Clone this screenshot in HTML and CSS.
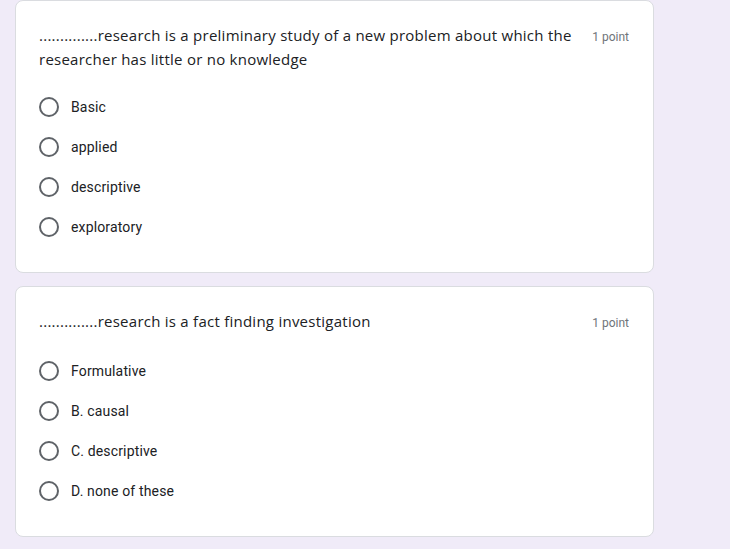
FILE: index.html
```html
<!DOCTYPE html>
<html lang="en">
<head>
  <meta charset="UTF-8">
  <meta name="viewport" content="width=device-width, initial-scale=1.0">
  <title>Research Quiz</title>
  <link rel="stylesheet" href="styles.css">
</head>
<body>
  <!-- Question 1 -->
  <div class="card">
    <div class="question-head">
      <p class="question">..............research is a preliminary study of a new problem about which the researcher has little or no knowledge</p>
      <span class="points">1 point</span>
    </div>
    <div class="options first">
      <label class="option"><span class="radio"></span>Basic</label>
      <label class="option"><span class="radio"></span>applied</label>
      <label class="option"><span class="radio"></span>descriptive</label>
      <label class="option"><span class="radio"></span>exploratory</label>
    </div>
  </div>

  <!-- Question 2 -->
  <div class="card">
    <div class="question-head">
      <p class="question">..............research is a fact finding investigation</p>
      <span class="points">1 point</span>
    </div>
    <div class="options second">
      <label class="option"><span class="radio"></span>Formulative</label>
      <label class="option"><span class="radio"></span>B. causal</label>
      <label class="option"><span class="radio"></span>C. descriptive</label>
      <label class="option"><span class="radio"></span>D. none of these</label>
    </div>
  </div>
</body>
</html>
```

FILE: styles.css
```css
* {
  margin: 0;
  padding: 0;
  box-sizing: border-box;
}

body {
  background: #f0ebf8;
  font-family: Roboto, 'Liberation Sans', sans-serif;
  color: #202124;
  padding: 0 0 13px 15px;
}

.card {
  width: 639px;
  background: #fff;
  border: 1px solid #dadce0;
  border-radius: 8px;
  padding: 22px 24px 25px 23px;
  margin-bottom: 13px;
}

.question-head {
  display: flex;
  align-items: flex-start;
}

.question {
  flex: 1;
  font-family: 'Open Sans', sans-serif;
  font-size: 15px;
  line-height: 24px;
  letter-spacing: 0.25px;
  padding-right: 16px;
}

.points {
  height: 24px;
  padding-top: 2px;
  font-size: 12px;
  line-height: 24px;
  color: #70757a;
  white-space: nowrap;
}

.options.first {
  margin-top: 16px;
}

.options.second {
  margin-top: 18px;
}

.option {
  display: flex;
  align-items: center;
  height: 40px;
  font-size: 14px;
  letter-spacing: 0.15px;
}

.radio {
  width: 20px;
  height: 20px;
  border: 2px solid #5f6368;
  border-radius: 50%;
  margin-right: 12px;
  flex-shrink: 0;
}
```
